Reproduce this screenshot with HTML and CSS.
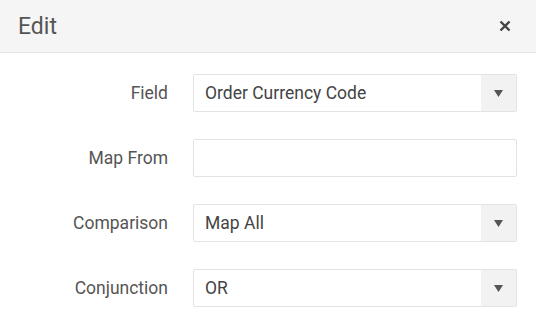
FILE: index.html
```html
<!DOCTYPE html>
<html lang="en">
<head>
    <meta charset="UTF-8">
    <title>Edit</title>
    <link rel="stylesheet" href="styles.css">
</head>
<body>
    <div class="dialog">
        <div class="dialog-header">
            <h2 class="dialog-title">Edit</h2>
            <button class="close-btn" aria-label="Close">
                <svg width="12" height="12" viewBox="0 0 12 12">
                    <path d="M1.5 1.5 L10.5 10.5 M10.5 1.5 L1.5 10.5" stroke="#444" stroke-width="2.4" stroke-linecap="butt"/>
                </svg>
            </button>
        </div>

        <form class="dialog-body">
            <label class="form-label">Field</label>
            <div class="select-box">
                <span class="select-value">Order Currency Code</span>
                <span class="select-arrow"><svg width="9" height="7" viewBox="0 0 9 7"><path d="M0 0 H9 L4.5 7 Z" fill="#555"/></svg></span>
            </div>

            <label class="form-label">Map From</label>
            <input type="text" class="text-input">

            <label class="form-label">Comparison</label>
            <div class="select-box">
                <span class="select-value">Map All</span>
                <span class="select-arrow"><svg width="9" height="7" viewBox="0 0 9 7"><path d="M0 0 H9 L4.5 7 Z" fill="#555"/></svg></span>
            </div>

            <label class="form-label">Conjunction</label>
            <div class="select-box">
                <span class="select-value">OR</span>
                <span class="select-arrow"><svg width="9" height="7" viewBox="0 0 9 7"><path d="M0 0 H9 L4.5 7 Z" fill="#555"/></svg></span>
            </div>
        </form>
    </div>
</body>
</html>
```

FILE: styles.css
```css
body {
    margin: 0;
    padding: 0;
    background: #fff;
    font-family: Roboto, "Liberation Sans", Arial, sans-serif;
    color: #555;
}

.dialog {
    width: 536px;
}

/* Header */
.dialog-header {
    height: 52px;
    background: #f5f5f5;
    border-bottom: 1px solid #e4e4e4;
    display: flex;
    align-items: center;
    justify-content: space-between;
    padding: 0 25px 0 18px;
}

.dialog-title {
    margin: 0;
    font-size: 23px;
    font-weight: normal;
    color: #555;
}

.close-btn {
    background: none;
    border: none;
    padding: 0;
    width: 12px;
    height: 12px;
    display: flex;
    cursor: pointer;
}

/* Form */
.dialog-body {
    display: grid;
    grid-template-columns: 150px 324px;
    column-gap: 25px;
    row-gap: 27px;
    padding: 21px 19px 0 18px;
    margin: 0;
}

.form-label {
    font-size: 17.5px;
    color: #555;
    text-align: right;
    align-self: center;
}

.select-box,
.text-input {
    box-sizing: border-box;
    height: 38px;
    border: 1px solid #e3e3e3;
    border-radius: 2px;
    background: #fff;
}

.text-input {
    width: 100%;
    outline: none;
    font: inherit;
}

.select-box {
    display: flex;
    align-items: stretch;
}

.select-value {
    flex: 1;
    display: flex;
    align-items: center;
    padding-left: 11px;
    font-size: 17.5px;
    color: #444;
}

.select-arrow {
    width: 35px;
    background: #f2f2f2;
    display: flex;
    align-items: center;
    justify-content: center;
}
```
